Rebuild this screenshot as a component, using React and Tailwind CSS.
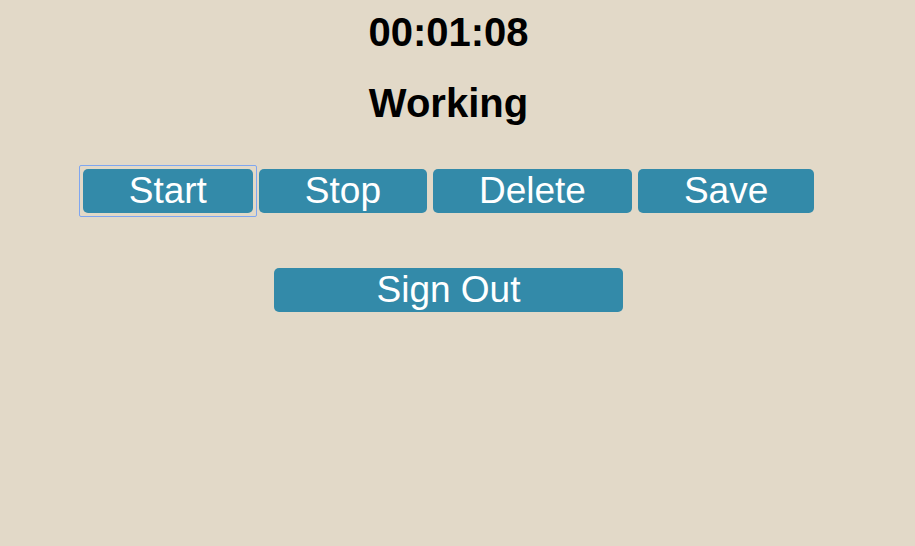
export default function App() {
  const buttons = [
    { label: "Start", focused: true },
    { label: "Stop" },
    { label: "Delete" },
    { label: "Save" },
  ];

  return (
    <div className="min-h-[546px] w-full bg-[#e2d9c8] font-['Liberation_Sans',Arial,sans-serif]">
      <div className="w-[897px] pt-[10px] flex flex-col items-center">
        {/* Timer + status */}
        <h1 className="text-[40px] leading-[45px] font-bold text-black">00:01:08</h1>
        <h2 className="mt-[26px] text-[40px] leading-[45px] font-bold text-black">Working</h2>

        {/* Controls */}
        <div className="mt-[43px] flex gap-[6px]">
          {buttons.map((b) => (
            <button
              key={b.label}
              className="relative h-[44px] px-[46px] rounded-[5px] bg-[#338aa9] text-white text-[37px] leading-[44px]"
            >
              {b.label}
              {b.focused && (
                <span className="pointer-events-none absolute -inset-[4px] rounded-[2px] border border-[#7fa6f0]" />
              )}
            </button>
          ))}
        </div>

        <button className="mt-[55px] h-[44px] w-[349px] rounded-[5px] bg-[#338aa9] text-white text-[37px] leading-[42px]">
          Sign Out
        </button>
      </div>
    </div>
  );
}
